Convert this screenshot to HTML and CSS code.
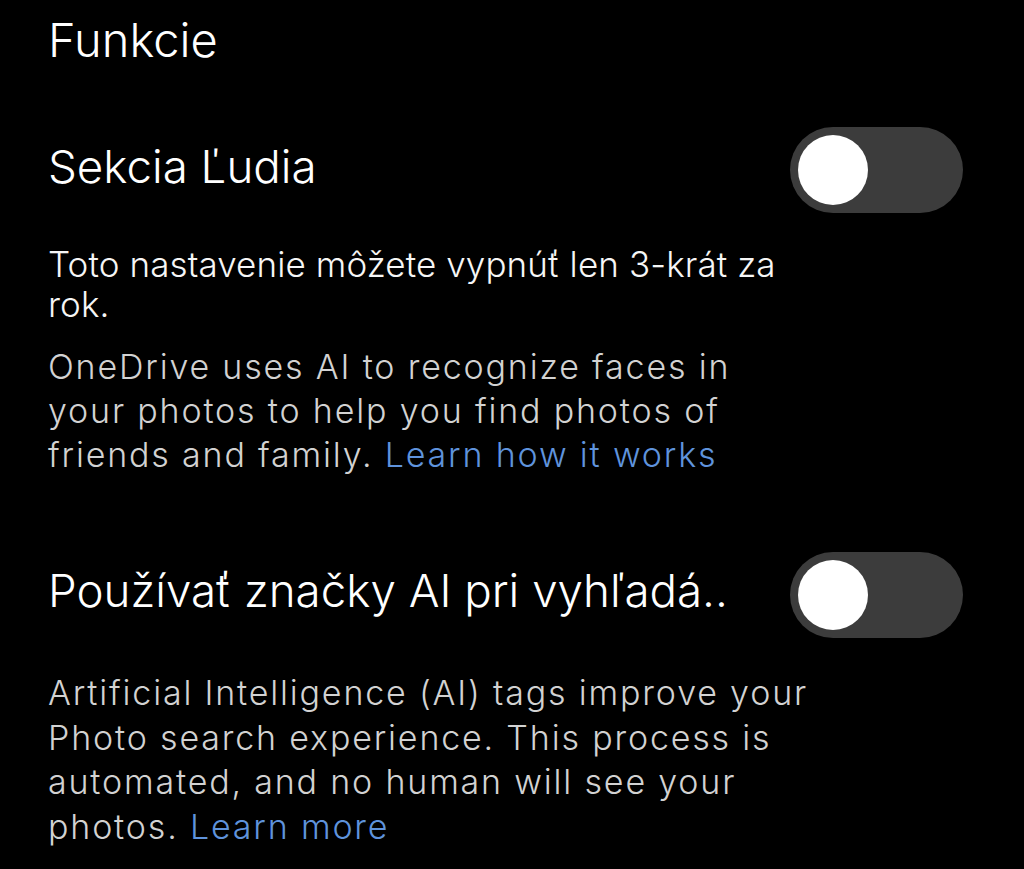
FILE: index.html
```html
<!DOCTYPE html>
<html lang="sk">
<head>
<meta charset="utf-8">
<title>Funkcie</title>
<link rel="stylesheet" href="styles.css">
</head>
<body>
<main class="settings">
  <h1 class="section-title">Funkcie</h1>

  <div class="setting-row first">
    <span class="setting-label">Sekcia Ľudia</span>
    <span class="switch" role="switch" aria-checked="false"><span class="switch-knob"></span></span>
  </div>
  <p class="note">Toto nastavenie môžete vypnúť len 3-krát za<br>rok.</p>
  <p class="desc faces">OneDrive uses AI to recognize faces in<br>your photos to help you find photos of<br>friends and family. <a class="link" href="#">Learn how it works</a></p>

  <div class="setting-row second">
    <span class="setting-label">Používať značky AI pri vyhľadá..</span>
    <span class="switch" role="switch" aria-checked="false"><span class="switch-knob"></span></span>
  </div>
  <p class="desc tags">Artificial Intelligence (AI) tags improve your<br>Photo search experience. This process is<br>automated, and no human will see your<br>photos. <a class="link" href="#">Learn more</a></p>
</main>
</body>
</html>
```

FILE: styles.css
```css
html, body {
  margin: 0;
  background: #000;
}

body {
  font-family: "Inter", "Noto Sans", sans-serif;
  font-weight: 350;
  color: #fff;
  height: 869px;
  overflow: hidden;
}

.settings {
  padding: 0 61px 0 48px;
}

.section-title {
  margin: 10px 0 0;
  font-size: 47px;
  font-weight: 350;
  line-height: 60px;
}

.setting-row {
  display: flex;
  align-items: flex-start;
  justify-content: space-between;
  height: 86px;
}

.setting-row.first {
  margin-top: 57px;
}

.setting-row.second {
  margin-top: 75px;
}

.setting-label {
  font-size: 45.7px;
  line-height: 80px;
  white-space: nowrap;
}

.second .setting-label {
  line-height: 78px;
}

.switch {
  position: relative;
  flex: none;
  width: 173px;
  height: 86px;
  border-radius: 43px;
  background: #3c3c3c;
}

.switch-knob {
  position: absolute;
  left: 8px;
  top: 8px;
  width: 70px;
  height: 70px;
  border-radius: 50%;
  background: #fff;
}

.note {
  margin: 31px 0 0;
  font-size: 35px;
  line-height: 40px;
  letter-spacing: 0.1px;
  color: #f6f6f6;
  white-space: nowrap;
}

.desc {
  margin: 0;
  font-size: 34px;
  color: #d2d2d2;
  white-space: nowrap;
}

.desc.faces {
  margin-top: 21px;
  line-height: 44px;
  letter-spacing: 1.82px;
}

.desc.tags {
  margin-top: 33px;
  line-height: 44.5px;
  letter-spacing: 1.82px;
}

.link {
  color: #5f93dc;
  text-decoration: none;
}
```
